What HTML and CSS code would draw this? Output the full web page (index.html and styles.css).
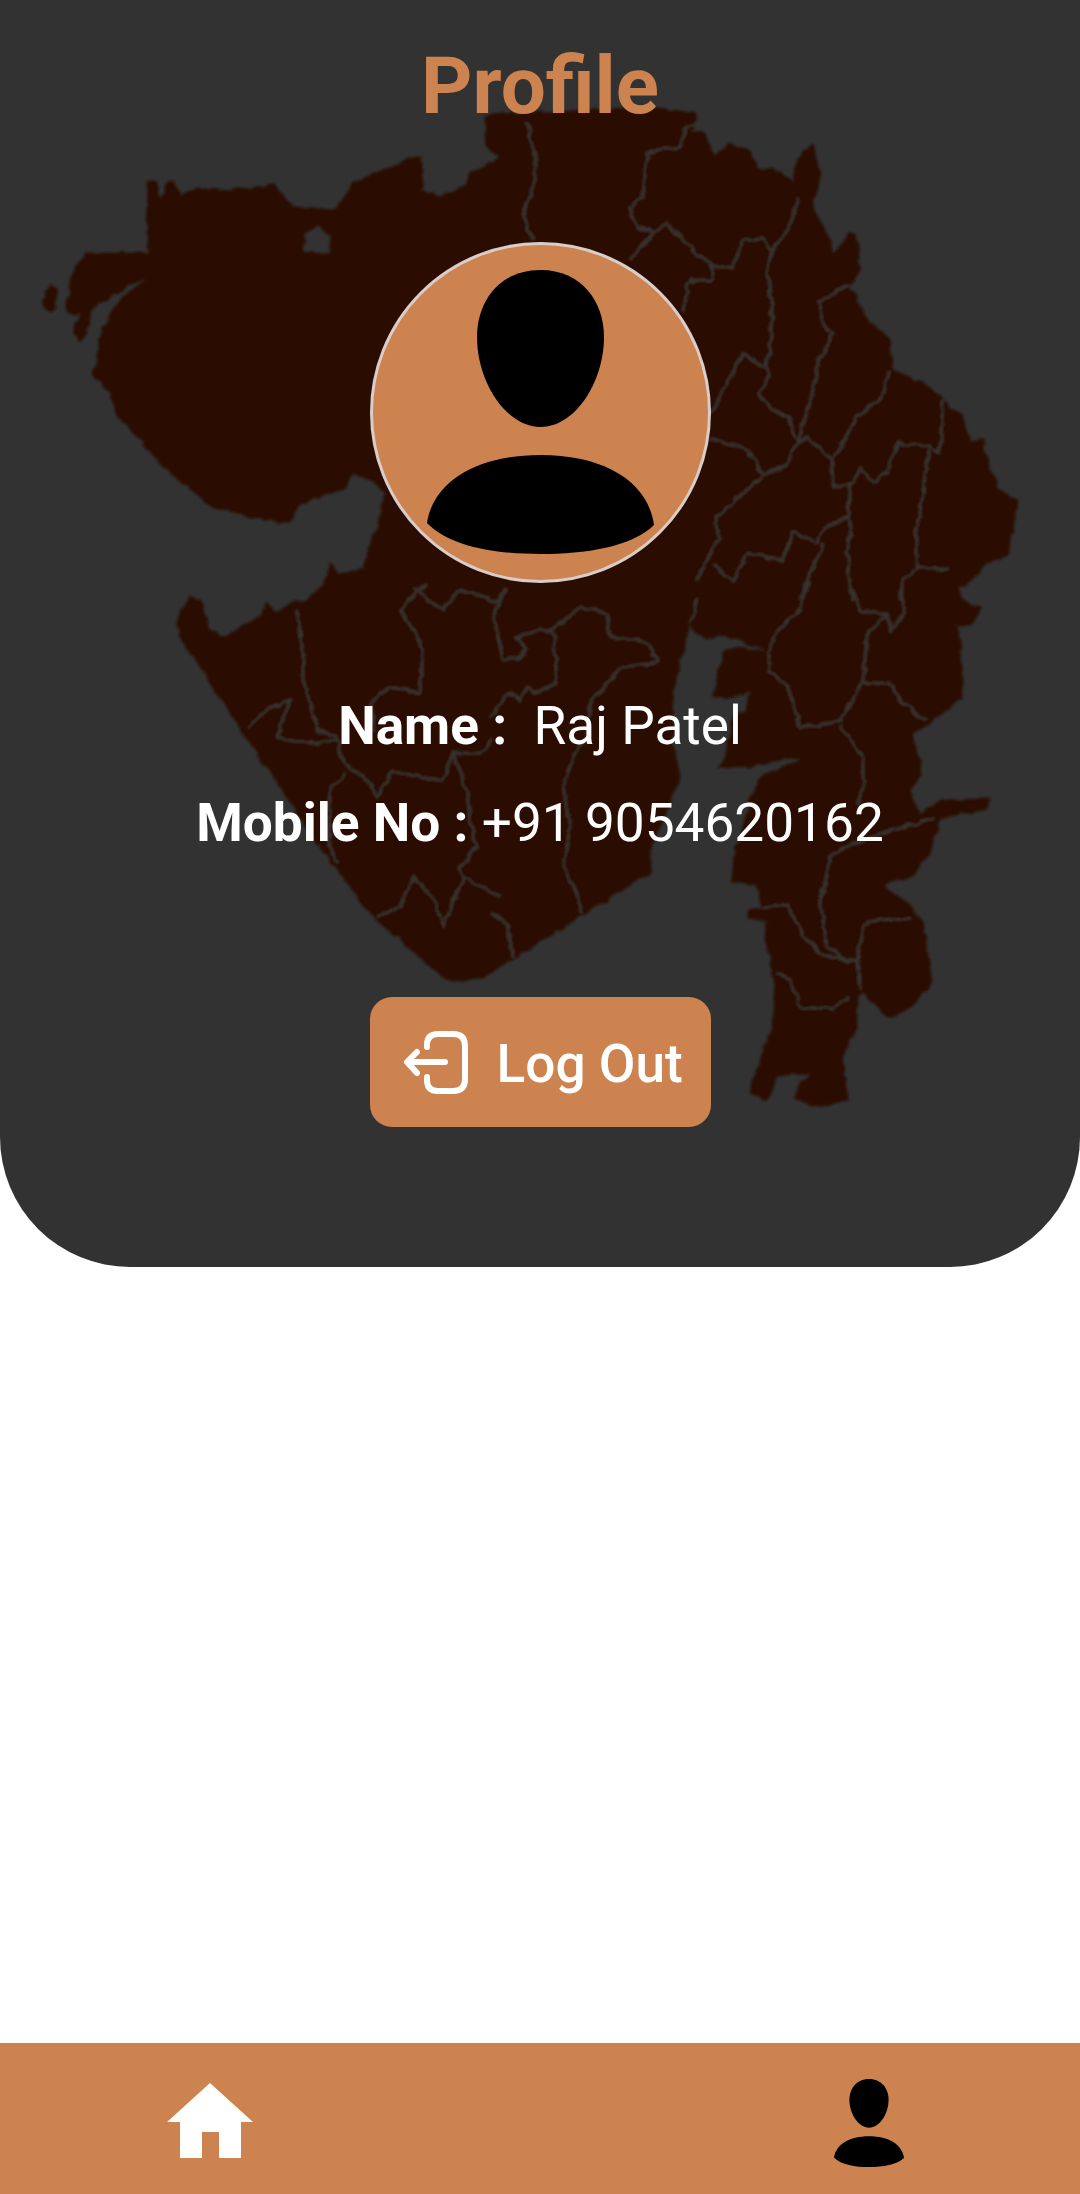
FILE: index.html
```html
<!DOCTYPE html>
<html lang="en">
<head>
<meta charset="utf-8">
<title>Profile</title>
<link rel="stylesheet" href="styles.css">
</head>
<body>
<main class="panel">
  <svg class="map" viewBox="0 0 1080 1267" aria-hidden="true">
    <defs>
      <filter id="rough" x="0" y="0" width="100%" height="100%" filterUnits="userSpaceOnUse" primitiveUnits="userSpaceOnUse">
        <feTurbulence type="fractalNoise" baseFrequency="0.09" numOctaves="2" seed="4" result="noise"/>
        <feDisplacementMap in="SourceGraphic" in2="noise" scale="7" xChannelSelector="R" yChannelSelector="G"/>
        <feGaussianBlur stdDeviation="1.1"/>
      </filter>
    </defs>
    <g class="map-art">
    <path class="land" fill-rule="evenodd" d="M67 300 75 267 87 253 147 253 148 180 157 180 160 200 168 182 175 183 180 197 197 188 220 190 267 187 272 182 293 208 337 210 352 183 360 180 415 157 422 157 422 190 440 198 463 187 470 175 500 157 487 147 485 117 496 114 661 108 695 114 695 128 690 130 703 132 715 157 728 143 748 150 758 168 782 172 793 183 797 160 813 143 820 178 812 207 830 240 833 255 850 233 857 237 860 270 850 287 870 323 890 338 892 370 907 377 920 380 938 395 962 417 970 442 983 440 987 460 998 490 1018 500 1007 557 987 563 970 583 958 588 962 600 983 609 970 625 958 625 963 697 927 725 913 735 922 773 910 790 920 814 943 800 990 799 987 809 940 818 930 852 913 876 883 886 903 900 923 921 932 983 907 1010 887 1017 863 993 857 997 857 1028 843 1055 847 1100 817 1107 793 1097 810 1072 777 1076 767 1100 750 1093 760 1059 772 1028 775 983 765 938 767 921 747 919 747 911 763 907 757 886 732 880 735 852 753 793 763 775 798 761 797 757 750 766 717 768 727 756 733 714 747 711 750 692 733 697 713 697 720 667 725 650 745 648 767 652 753 645 723 635 703 640 690 623 683 653 672 693 673 743 680 777 653 843 650 873 590 910 515 957 483 977 460 983 443 977 373 917 320 847 277 783 233 717 180 637 177 620 190 597 200 600 210 630 223 637 260 617 267 603 275 613 290 603 307 600 323 583 332 563 337 573 363 570 377 527 387 493 372 482 352 473 347 488 300 503 290 522 273 522 247 515 213 507 163 467 143 443 123 423 117 410 107 390 93 373 98 350 102 327 120 300 147 278 130 285 93 307 87 333 80 342 73 333 80 313 67 313ZM303 250 307 232 317 225 328 233 332 252 317 254ZM43 300 50 285 58 290 53 313 45 308Z"/>
    <path class="borders" d="M798 197 790 227 772 250 767 273 772 307 770 350 765 367 768 377 758 393 770 408 788 417 793 433 798 443M690 250 713 267 733 267 743 240 763 238 772 250M713 267 713 280 690 280M850 285 837 290 818 303 823 323 833 333 820 360 810 400 803 423 798 443M890 370 880 400 857 417 843 443 832 460 823 450 807 438 798 443M832 460 833 487 853 483 860 467 873 482 887 473 898 443 928 447 940 453 943 400M928 450 923 493 917 530 917 567 950 570M917 567 903 580 900 600M850 483 847 517 853 527 847 550 853 600M847 518 823 527 818 543 793 532 783 560 747 553 733 583 713 563M823 543 810 573 800 600M798 443 787 463 763 475 753 457 740 447 710 438M762 477 743 493 723 513 717 517 718 540 707 560 697 580M743 353 763 367M743 353 727 383 713 410 705 417M527 123 535 160 535 180 523 213 533 240M700 123 687 127 680 147 647 153 643 197 630 207 637 227 653 233 667 223 700 257M653 233 630 260M700 280 687 283 683 313M297 610 303 653 303 680 317 730 337 737M247 727 267 710 290 700 277 737 310 743 337 740 343 760 357 773 370 783 377 797 393 770 417 777 443 780 453 753 480 753 493 740M330 787 347 773M330 787 330 847 337 863M400 610 413 630 423 650 420 693 390 687 373 700 373 733M400 610 427 583M413 588 443 610 460 590 500 603M453 753 467 793 470 820 477 847 460 867 463 877 443 927 437 903 413 877 400 907 377 917M463 877 500 897M507 587 493 613 503 660 520 657 527 650 517 637 540 630 553 630 580 607 607 613 610 637 650 643 657 663 623 667 607 683 590 703 587 737 573 757 563 787 570 827 563 867 577 893 583 913M553 630 557 683 533 693 528 687 520 700 510 693 490 717M490 913 507 923 513 957M697 597 693 617 690 623M770 647 777 630 800 610 810 580M770 647 770 670 790 690 797 717 800 727 830 723 840 721 863 683 867 635 887 614 860 611 850 580M887 614 892 632 903 614 903 580M863 683 890 683 900 700 927 721M840 725 863 759 863 787 857 804M890 831 933 818M890 831 850 845 830 856 820 901 827 945 843 959 857 962 863 925 873 921 913 917M857 962 860 990M763 907 787 904 803 935 823 955 843 959M777 973 790 980 800 1007 833 1009 850 997"/>
    </g>
  </svg>
  <h1 class="title">Profile</h1>
  <div class="avatar">
    <svg class="avatar-art" viewBox="0 0 340 340" aria-hidden="true">
      <path d="M170.5 28C212 28 234 60 234 95C234 140 205 185 170.5 185C136 185 107 140 107 95C107 60 129 28 170.5 28Z"/>
      <path d="M170.5 213C235 213 278 240 284 283C262 305 215 312 170.5 312C126 312 80 305 57 281C63 240 106 213 170.5 213Z"/>
    </svg>
  </div>
  <p class="row row-name"><strong>Name :</strong>&nbsp; Raj Patel</p>
  <p class="row row-mobile"><strong>Mobile No :</strong> +91 9054620162</p>
  <button class="logout" type="button">
    <svg class="logout-icon" viewBox="0 0 66 66" aria-hidden="true">
      <path d="M24 18V16Q24 5 35 5H50Q62 5 62 17V50Q62 62 50 62H35Q24 62 24 51V48M42 33H5M14 23 4 33 14 44"/>
    </svg>
    <span class="logout-label">Log Out</span>
  </button>
</main>
<nav class="nav">
  <svg class="nav-home" viewBox="0 0 86 75" aria-label="Home">
    <path d="M43 0 86 39H74V75H52V49H35V75H13V39H0Z"/>
  </svg>
  <svg class="nav-user" viewBox="57 28 227 284" preserveAspectRatio="none" aria-label="Profile">
    <path d="M170.5 28C212 28 234 60 234 95C234 140 205 185 170.5 185C136 185 107 140 107 95C107 60 129 28 170.5 28Z"/>
    <path d="M170.5 213C235 213 278 240 284 283C262 305 215 312 170.5 312C126 312 80 305 57 281C63 240 106 213 170.5 213Z"/>
  </svg>
</nav>
</body>
</html>
```

FILE: styles.css
```css
* {
  box-sizing: border-box;
}

html,
body {
  margin: 0;
  padding: 0;
}

body {
  width: 1080px;
  height: 2194px;
  display: flex;
  flex-direction: column;
  justify-content: space-between;
  background: #ffffff;
  font-family: Roboto, "Liberation Sans", sans-serif;
  overflow: hidden;
}

.panel {
  position: relative;
  height: 1267px;
  display: flex;
  flex-direction: column;
  align-items: center;
  background: #323232;
  border-radius: 0 0 130px 130px;
  overflow: hidden;
  color: #ffffff;
}

.map {
  position: absolute;
  top: 0;
  left: 0;
  width: 1080px;
  height: 1267px;
}

.map-art {
  filter: url(#rough);
}

.land {
  fill: #2b0f02;
  stroke: #2b0f02;
  stroke-width: 1;
  stroke-linejoin: round;
}

.borders {
  fill: none;
  stroke: #37302d;
  stroke-width: 3;
  stroke-linejoin: round;
}

.title,
.row,
.avatar,
.logout {
  position: relative;
}

.title {
  margin: 41px 0 0;
  font-size: 80px;
  line-height: 90px;
  font-weight: 700;
  color: #cd834f;
}

.avatar {
  width: 341px;
  height: 341px;
  margin-top: 111px;
  border: 3px solid #d9cdcb;
  border-radius: 50%;
  background: #cd834f;
}

.avatar-art {
  display: block;
  width: 340px;
  height: 340px;
  margin: -3px;
}

.row {
  margin: 0;
  font-size: 53.2px;
  line-height: 62px;
  font-weight: 400;
  white-space: nowrap;
}

.row strong {
  font-weight: 700;
}

.row-name {
  margin-top: 112px;
}

.row-mobile {
  margin-top: 35px;
}

.logout {
  width: 341px;
  height: 130px;
  margin-top: 143px;
  padding: 0 0 0 33px;
  display: flex;
  align-items: center;
  gap: 28px;
  border: 0;
  border-radius: 22px;
  background: #cd834f;
  color: #ffffff;
  font-family: inherit;
  font-size: 53.2px;
  font-weight: 500;
}

.logout-icon {
  width: 66px;
  height: 66px;
  flex: none;
  fill: none;
  stroke: #ffffff;
  stroke-width: 6;
  stroke-linecap: round;
  stroke-linejoin: round;
}

.logout-label {
  padding-top: 3px;
}

.nav {
  height: 151px;
  display: flex;
  justify-content: space-between;
  padding: 36px 176px 0 167px;
  align-items: flex-start;
  background: #cd834f;
}

.nav-home {
  width: 86px;
  height: 75px;
  margin-top: 4px;
  fill: #ffffff;
}

.nav-user {
  width: 70px;
  height: 88px;
  fill: #000000;
}
```
